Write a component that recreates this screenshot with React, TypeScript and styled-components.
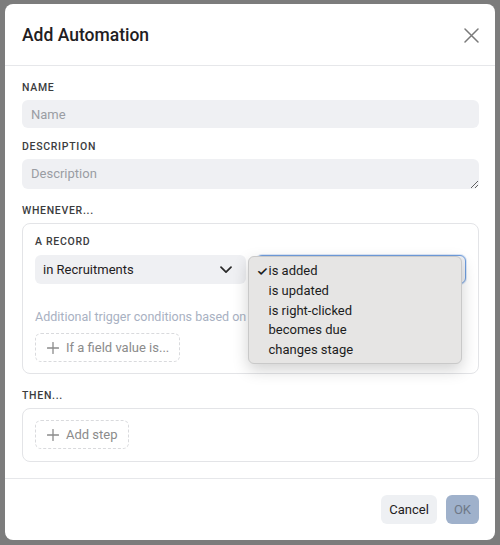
import React from 'react';
import styled, { createGlobalStyle } from 'styled-components';

const FONT = "Roboto, Inter, 'Liberation Sans', sans-serif";

const GlobalStyle = createGlobalStyle`
  html, body {
    margin: 0;
    padding: 0;
  }
  body {
    font-family: ${FONT};
    background: #7c7c7c;
  }
  * {
    box-sizing: border-box;
  }
`;

const triggers = ['is added', 'is updated', 'is right-clicked', 'becomes due', 'changes stage'];

const PlusIcon = () => (
  <svg width="12" height="12" viewBox="0 0 12 12" fill="none">
    <path d="M6 0.5v11M0.5 6h11" stroke="#8b8b8b" strokeWidth="1.3" strokeLinecap="round" />
  </svg>
);

const App: React.FC = () => {
  return (
    <Backdrop>
      <GlobalStyle />
      <Modal>
        <Header>
          <Title>Add Automation</Title>
          <CloseButton aria-label="Close">
            <svg width="15" height="15" viewBox="0 0 15 15" fill="none">
              <path d="M1 1l13 13M14 1L1 14" stroke="#7a7a7a" strokeWidth="1.5" strokeLinecap="round" />
            </svg>
          </CloseButton>
        </Header>

        <Body>
          <Label>Name</Label>
          <TextInput placeholder="Name" />

          <Label>Description</Label>
          <TextArea placeholder="Description" />

          <Label>Whenever...</Label>
          <Panel>
            <SubLabel>A record</SubLabel>
            <SelectRow>
              <Select>
                <span>in Recruitments</span>
                <svg width="12" height="8" viewBox="0 0 12 8" fill="none">
                  <path d="M1 1.2l5 5 5-5" stroke="#2a2a2a" strokeWidth="1.7" strokeLinecap="round" strokeLinejoin="round" />
                </svg>
              </Select>
              <MenuAnchor>
                <Select focused />
                <Menu>
                  {triggers.map((t, i) => (
                    <MenuItem key={t}>
                      <Check>{i === 0 ? '✓' : ''}</Check>
                      {t}
                    </MenuItem>
                  ))}
                </Menu>
              </MenuAnchor>
            </SelectRow>
            <Hint>Additional trigger conditions based on</Hint>
            <DashedButton>
              <PlusIcon />
              If a field value is...
            </DashedButton>
          </Panel>

          <Label>Then...</Label>
          <Panel compact>
            <DashedButton>
              <PlusIcon />
              Add step
            </DashedButton>
          </Panel>
        </Body>

        <Footer>
          <Button>Cancel</Button>
          <Button primary disabled>
            OK
          </Button>
        </Footer>
      </Modal>
    </Backdrop>
  );
};
export default App;

const Backdrop = styled.div`
  width: 500px;
  height: 545px;
  padding: 4px 5px 5px 5px;
  background: #7c7c7c;
`;

const Modal = styled.div`
  width: 490px;
  height: 536px;
  background: #fff;
  border-radius: 8px;
  display: flex;
  flex-direction: column;
`;

const Header = styled.div`
  height: 62px;
  flex-shrink: 0;
  display: flex;
  align-items: center;
  justify-content: space-between;
  padding: 0 16px 0 17px;
  border-bottom: 1px solid #e6e7ea;
`;

const Title = styled.h2`
  margin: 0;
  margin-top: 1px;
  font-size: 17.5px;
  font-weight: 500;
  color: #1f2022;
`;

const CloseButton = styled.button`
  border: none;
  background: none;
  padding: 0;
  display: flex;
  margin-top: 1px;
`;

const Body = styled.div`
  flex: 1;
  display: flex;
  flex-direction: column;
  padding: 15px 16px 15px 17px;
`;

const Label = styled.div`
  font-size: 10.5px;
  font-weight: 500;
  letter-spacing: 0.7px;
  text-transform: uppercase;
  color: #3b3c3e;
  line-height: 13px;
  margin-bottom: 6px;
`;

const SubLabel = styled(Label)`
  margin-bottom: 7px;
`;

const fieldBase = `
  width: 100%;
  border: none;
  outline: none;
  background: #eff0f3;
  border-radius: 6px;
  font-family: ${FONT};
  font-size: 13px;
  color: #1f2022;
  padding: 0 9px;
  &::placeholder {
    color: #9a9da3;
  }
`;

const TextInput = styled.input`
  ${fieldBase}
  height: 28px;
  margin-bottom: 12px;
`;

const TextArea = styled.textarea`
  ${fieldBase}
  height: 30px;
  padding-top: 7px;
  resize: vertical;
  margin-bottom: 15px;
  display: block;
`;

const Panel = styled.div<{ compact?: boolean }>`
  border: 1px solid #e3e4e7;
  border-radius: 8px;
  padding: ${(p) => (p.compact ? '11px 12px 12px' : '11px 12px 11px')};
  margin-bottom: ${(p) => (p.compact ? '0' : '15px')};
  display: flex;
  flex-direction: column;
  align-items: flex-start;
`;

const SelectRow = styled.div`
  width: 100%;
  display: grid;
  grid-template-columns: 1fr 1fr;
  gap: 10px;
  margin-bottom: 25px;
`;

const Select = styled.div<{ focused?: boolean }>`
  height: 29px;
  border-radius: 6px;
  background: #eff0f3;
  display: flex;
  align-items: center;
  justify-content: space-between;
  padding: 0 14px 0 8px;
  font-size: 13px;
  color: #1f2022;
  border: ${(p) => (p.focused ? '1px solid #6f9ddd' : 'none')};
  box-shadow: ${(p) => (p.focused ? '0 0 0 1px rgba(111,157,221,0.25)' : 'none')};
`;

const MenuAnchor = styled.div`
  position: relative;
`;

const Menu = styled.div`
  position: absolute;
  top: 1px;
  left: -8px;
  width: 214px;
  padding: 4px 0 4px;
  background: #e6e5e4;
  border: 1px solid #c9c9c9;
  border-radius: 6px;
  box-shadow: 0 6px 16px rgba(0, 0, 0, 0.18);
  z-index: 10;
`;

const MenuItem = styled.div`
  height: 19.7px;
  display: flex;
  align-items: center;
  font-size: 13px;
  color: #1c1c1c;
  padding-left: 8px;
`;

const Check = styled.span`
  width: 12px;
  font-size: 13px;
  font-weight: 600;
`;

const Hint = styled.div`
  font-size: 12.5px;
  color: #a8b1c2;
  margin-bottom: 9px;
  white-space: nowrap;
`;

const DashedButton = styled.button`
  height: 29px;
  display: flex;
  align-items: center;
  gap: 7px;
  padding: 0 10px 0 11px;
  border: 1px dashed #d9dadd;
  border-radius: 6px;
  background: #fff;
  font-family: ${FONT};
  font-size: 13px;
  color: #8b8b8b;
`;

const Footer = styled.div`
  flex-shrink: 0;
  border-top: 1px solid #e6e7ea;
  display: flex;
  justify-content: flex-end;
  gap: 9px;
  padding: 16px 16px 16px 17px;
`;

const Button = styled.button<{ primary?: boolean }>`
  height: 29px;
  padding: 0 8px;
  border: none;
  border-radius: 6px;
  font-family: ${FONT};
  font-size: 13px;
  background: ${(p) => (p.primary ? '#9fb1cb' : '#eef0f3')};
  color: ${(p) => (p.primary ? '#6e7887' : '#1f2022')};
`;
